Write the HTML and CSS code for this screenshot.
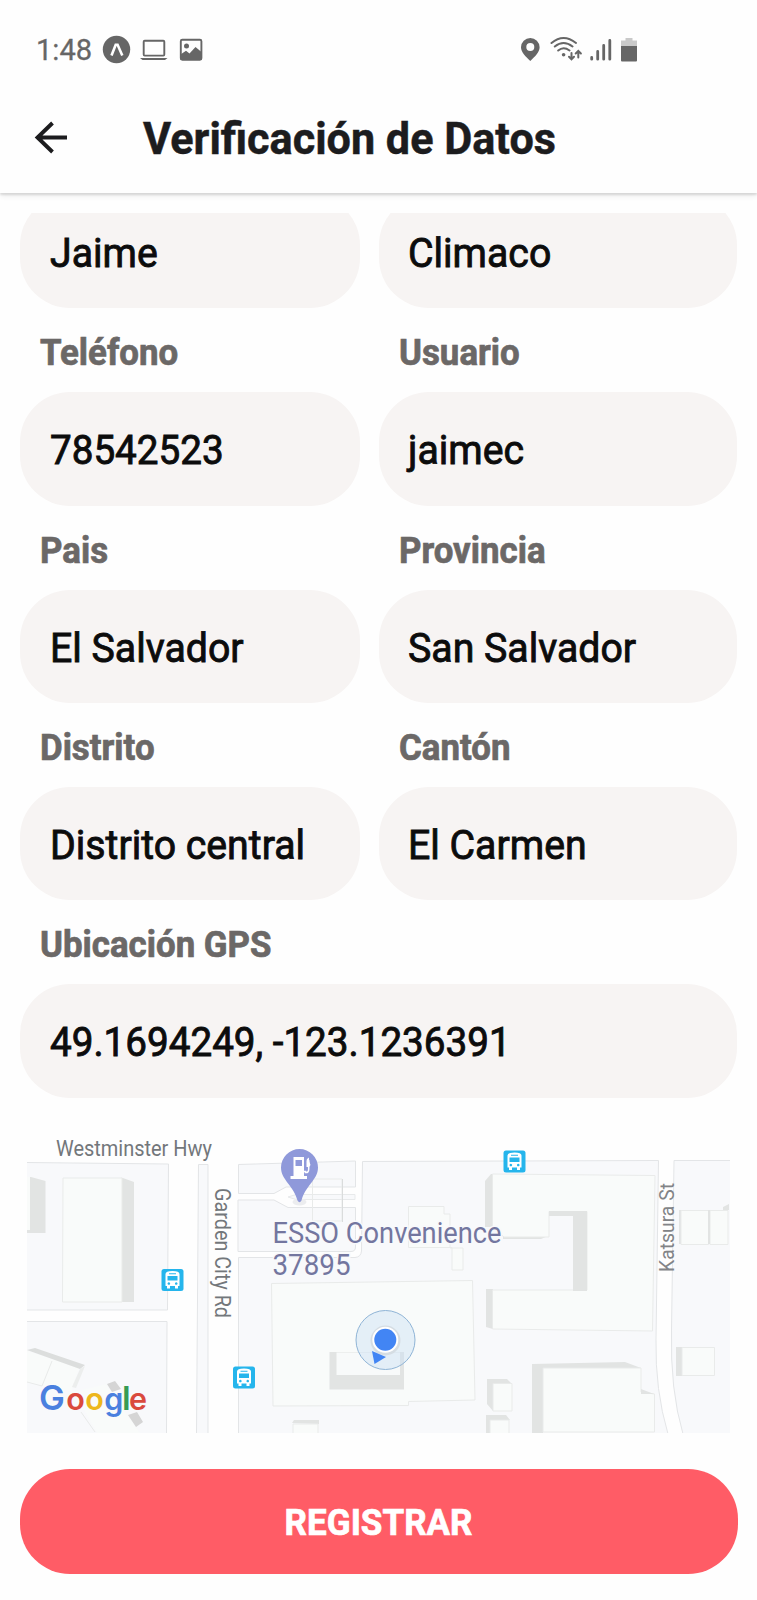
FILE: index.html
```html
<!DOCTYPE html>
<html lang="es">
<head>
<meta charset="utf-8">
<title>Verificación de Datos</title>
<link rel="stylesheet" href="styles.css">
</head>
<body>
<div class="statusbar">
  <span class="clock">1:48</span>
  <svg class="icons-left" width="102" height="30" viewBox="102 34 102 30">
    <circle cx="116.500" cy="48.500" r="13.700" fill="#666"/>
    <path d="M111.500 54.500L115.700 43.800H117.600L122.300 54.500" fill="none" stroke="#fff" stroke-width="2.600"/>
    <rect x="143.700" y="39.800" width="20.600" height="14.800" rx="1" fill="none" stroke="#666" stroke-width="1.900"/>
    <path d="M140 57H167.500L165 59H142.500Z" fill="#666"/>
    <rect x="180.800" y="38.800" width="20.600" height="20" rx="1.500" fill="none" stroke="#666" stroke-width="1.900"/>
    <circle cx="186.500" cy="45" r="2.500" fill="#666"/>
    <path d="M180.500 53.500L186 49.700L189.500 52.500L195.500 46L201.500 51V59H180.500Z" fill="#666"/>
  </svg>
  <svg class="icons-right" width="120" height="30" viewBox="519 34 120 30">
    <path fill-rule="evenodd" d="M530.300 37a9.300 9.300 0 0 1 9.300 9.300c0 5-4.500 9-9.300 13.800c-4.800-4.800-9.300-8.800-9.300-13.800a9.300 9.300 0 0 1 9.300-9.300ZM530.300 42a4 4 0 1 0 0 8a4 4 0 0 0 0-8Z" fill="#666"/>
    <g fill="none" stroke="#666" stroke-width="2" stroke-linecap="round">
      <path d="M551.500 42Q563.500 32 576 42M554.800 45.500Q563.500 38.500 572.500 45.500M558.200 49.500Q563.500 45 569.500 49.500"/>
      <path d="M571.500 52V58M569 55.800L571.500 58.300L574 55.800M578.300 56.500V50.500M575.700 52.500L578.300 50L580.900 52.500"/>
      <path stroke-width="2.800" d="M591.700 56.500V58.200M597.700 50.500V58.200M603.700 44.500V58.200M609.800 39.500V58.200"/>
    </g>
    <circle cx="563.600" cy="53.700" r="1.800" fill="#666"/>
    <path d="M625.500 37H632.500V39.500H637V45H621V39.500H625.500Z" fill="#c9c9c9"/>
    <path d="M621 45H637V59.500Q637 60.600 636 60.600H622Q621 60.600 621 59.500Z" fill="#666"/>
  </svg>
</div>
<header class="header">
  <svg class="back" width="34" height="34" viewBox="0 0 34 34"><path d="M33 17.500H3M18.500 3L3.500 17.500L18.500 32" fill="none" stroke="#1c1c1e" stroke-width="3.900"/></svg>
  <h1 class="title"><span>Verificación de Datos</span></h1>
</header>
<main class="content">
  <div class="form">
    <div class="field"><div class="value"><span>Jaime</span></div></div>
    <div class="field"><div class="value"><span>Climaco</span></div></div>
    <div class="field"><div class="label"><span>Teléfono</span></div><div class="value numeric"><span>78542523</span></div></div>
    <div class="field"><div class="label"><span>Usuario</span></div><div class="value"><span>jaimec</span></div></div>
    <div class="field"><div class="label"><span>Pais</span></div><div class="value"><span>El Salvador</span></div></div>
    <div class="field"><div class="label"><span>Provincia</span></div><div class="value"><span>San Salvador</span></div></div>
    <div class="field"><div class="label"><span>Distrito</span></div><div class="value"><span>Distrito central</span></div></div>
    <div class="field"><div class="label"><span>Cantón</span></div><div class="value"><span>El Carmen</span></div></div>
    <div class="field wide"><div class="label"><span>Ubicación GPS</span></div><div class="value numeric"><span>49.1694249, -123.1236391</span></div></div>
  </div>
  <svg class="map" width="703" height="311" viewBox="27 1122 703 311">
    <defs>
      <g id="bus">
        <rect width="22" height="22" rx="2.500" fill="#25b5ec"/>
        <path fill="#fff" fill-rule="evenodd" d="M4 5Q4 2 11 2T18 5V17H16.500V19.500H13.500V17H8.500V19.500H5.500V17H4ZM6 7V11.500H16V7ZM7.500 4.300V5.200H14.500V4.300ZM7.300 13.200a1.300 1.300 0 1 0 .1 0ZM14.700 13.200a1.300 1.300 0 1 0 .1 0Z"/>
      </g>
    </defs>
    <rect x="27" y="1122" width="703" height="311" fill="#fefefe"/>
    <!-- city blocks -->
    <g fill="#f8f9fb" stroke="#e3e5e7" stroke-width="1">
      <path d="M26 1162.500L168.500 1164L167.500 1310H26Z"/>
      <path d="M26 1321.500H167L166.500 1434H26Z"/>
      <path d="M198.500 1164.500H208V1434H196.500Z"/>
      <path d="M238.500 1164.500L355.500 1161V1187H286L274 1193.500H238.500Z"/>
      <path d="M238 1200H274L288 1207.500H355.500V1247Q355.500 1251.500 351 1251.500H238Z"/>
      <path d="M238.500 1257.500H355Q361 1257 361.500 1251L362.500 1161.500L658.500 1160.500L656 1340Q655 1390 668 1434H238.500Z"/>
      <path d="M674 1160.500H731V1434H683Q670 1390 671.500 1330Z"/>
    </g>
    <!-- filling station lanes and canopy -->
    <path d="M288 1197L296 1194.500H355V1199.500H296Z" fill="#f8f9fb" stroke="#e8eaeb"/>
    <path d="M312.500 1179H342V1221H312.500Z" fill="none" stroke="#e9ebea"/>
    <path d="M342.500 1179V1222" stroke="#dadcdc"/>
    <!-- buildings: shaded walls -->
    <g fill="#e2e4e3">
      <path d="M27 1177H31L45.500 1181V1233H27Z"/>
      <path d="M121.500 1177.500L134 1182V1302H121.500Z"/>
      <path d="M485 1181L491 1174H493V1227H485Z"/>
      <path d="M503 1236H548L541 1239H503Z"/>
      <path d="M486 1289H493V1329L486 1327Z"/>
      <path d="M532 1364L625 1362L641 1368H543V1433H532Z"/>
      <path d="M487 1379H507L512 1384H493V1411L487 1404ZM486 1415H506L510 1420H491V1433H486Z"/>
      <path d="M676 1347H682V1376H676ZM679 1210H681V1244H679ZM723 1207L729 1204V1210H723Z"/>
      <path d="M292 1423L294 1420H319V1424Z"/>
    </g>
    <!-- buildings: roofs -->
    <g fill="#f9fbfa" stroke="#e9ebea" stroke-width="1">
      <path d="M27 1177H30V1230H27Z" stroke="none"/>
      <path d="M63 1178H122V1302H62.500Z"/>
      <path d="M27 1351L79 1368L72 1389L97 1433H140L106 1384L74 1392L27 1382Z" stroke="none"/>
      <path d="M27 1382L42 1386L52 1361M81 1412L95 1432" fill="none"/>
      <path d="M408.500 1206.500H444V1214H450V1248H463V1270H452V1247.500H408.500Z"/>
      <path d="M271.500 1283.500L472.500 1280.500L475 1400L408.500 1401.500V1405.500L273 1406Z"/>
      <path d="M492.500 1174L655 1175.500L652.500 1331L492.500 1329V1290H573.500H587V1211.500H549V1237H504L492.500 1228Z"/>
      <path d="M543 1368H641V1392L654.500 1394V1432H543Z"/>
      <path d="M493 1383.500H512V1411H493ZM490 1420H509V1434H490Z"/>
      <path d="M682 1347.500H714.500V1375.500H682ZM681 1210.500H708.500V1244.500H681ZM710 1210.500H728V1244.500H710ZM293 1424H318V1434H293Z"/>
    </g>
    <path d="M549 1211H587V1291H573V1216H549ZM708 1210H710V1244H708ZM641 1389L654 1394H641Z" fill="#e2e4e3"/>
    <path d="M329.500 1352H404V1389.500H329.500Z" fill="#e2e4e3"/>
    <path d="M336.500 1352.500H400V1375H336.500Z" fill="#f8fafa"/>
    <path d="M27 1350L35 1348L85 1365L80 1369Z" fill="#dcdedd"/>
    <path d="M80 1369L85 1366L76 1388L72 1387Z" fill="#eceeed"/>
    <path d="M107 1384L115 1381L121 1389L112 1392ZM128 1415L137 1412L143 1422L136 1427Z" fill="#d5d5d5"/>
    <!-- accuracy ring and position -->
    <circle cx="385.500" cy="1340" r="29.500" fill="#c9e0f3" fill-opacity=".45" stroke="#8fb4d6" stroke-width="1"/>
    <circle cx="385.500" cy="1340.500" r="15" fill="#d5dde3"/>
    <circle cx="385.300" cy="1339.700" r="13" fill="#fff"/>
    <circle cx="385.300" cy="1339.700" r="11" fill="#4285f4"/>
    <path d="M372 1351L386 1357L374.500 1364Z" fill="#4285f4"/>
    <use href="#bus" x="161.500" y="1269"/>
    <use href="#bus" x="233" y="1366.500"/>
    <use href="#bus" x="503.500" y="1150.500"/>
    <!-- fuel station pin -->
    <ellipse cx="299.500" cy="1202" rx="7" ry="3.500" fill="#ecedef"/>
    <path d="M299.500 1149a18.500 18.500 0 0 1 18.500 18.500C318 1180 305 1186 301.500 1200.500Q299.500 1204 297.500 1200.500C294 1186 281 1180 281 1167.500a18.500 18.500 0 0 1 18.500-18.500Z" fill="#8f99da"/>
    <path fill="#fff" fill-rule="evenodd" d="M293.500 1157H304V1176H307V1179H290.500V1176H293.500ZM295.500 1160V1166H302V1160Z"/>
    <path d="M304 1171.500H305.500V1172.500Q308.700 1173 308.700 1169V1160" fill="none" stroke="#fff" stroke-width="1.500"/>
    <path d="M307 1159L309 1157.500V1161L310.500 1165L309 1167H306.500V1161Z" fill="#fff"/>
    <!-- labels -->
    <g class="map-text">
      <text x="56" y="1156" font-size="21.500" textLength="156" lengthAdjust="spacingAndGlyphs" fill="#73777b">Westminster Hwy</text>
      <text transform="translate(214.500 1188) rotate(90)" font-size="21.500" textLength="130" lengthAdjust="spacingAndGlyphs" fill="#73777b">Garden City Rd</text>
      <text transform="translate(674 1272) rotate(-90)" font-size="20.500" textLength="89" lengthAdjust="spacingAndGlyphs" fill="#828487">Katsura St</text>
      <g fill="#73769f" stroke="#f8f9fb" stroke-width="3" paint-order="stroke">
        <text x="272.500" y="1242.500" font-size="29.500" textLength="229" lengthAdjust="spacingAndGlyphs">ESSO Convenience</text>
        <text x="272.500" y="1274.500" font-size="29.500" textLength="78" lengthAdjust="spacingAndGlyphs">37895</text>
      </g>
    </g>
    <text class="brand" y="1409.500" font-size="30.500"><tspan x="39" font-size="34.500" fill="#4a80df">G</tspan><tspan x="66.300" fill="#da4a3d">o</tspan><tspan x="85.300" fill="#edb71c">o</tspan><tspan x="104.300" fill="#4a80df">g</tspan><tspan x="122" font-size="33" fill="#369b53">l</tspan><tspan x="129" fill="#da4a3d">e</tspan></text>
  </svg>
  <button class="submit"><span>REGISTRAR</span></button>
</main>
</body>
</html>
```

FILE: styles.css
```css
* { box-sizing: border-box; }

body {
  margin: 0;
  width: 757px;
  height: 1600px;
  overflow: hidden;
  background: #fefefe;
  font-family: Roboto, "Noto Sans", sans-serif;
  display: flex;
  flex-direction: column;
}

.statusbar {
  height: 90px;
  padding: 9px 118px 0 36px;
  display: flex;
  align-items: center;
  flex: none;
}

.clock {
  width: 66px;
  padding-top: 1px;
  font-size: 30px;
  line-height: 34px;
  color: #666;
  white-space: nowrap;
  transform: scaleX(0.97);
  transform-origin: left;
  -webkit-text-stroke: 0.300px #666;
}

.icons-right { margin-left: auto; }

.header {
  flex: none;
  height: 103px;
  padding: 0 0 6px 34px;
  display: flex;
  align-items: center;
  background: #fefefe;
  box-shadow: 0 2px 2px rgba(0, 0, 0, 0.12), 0 5px 5px -1px rgba(0, 0, 0, 0.05);
}

.back { margin-bottom: 4px; }

.title {
  margin: 0 0 0 75px;
  font-size: 45px;
  line-height: 54px;
  font-weight: 700;
  color: #1c1c1e;
}

.title span,
.label span,
.value span,
.submit span {
  display: inline-block;
  white-space: nowrap;
  transform-origin: left;
}

.title span {
  transform: scaleX(0.959);
  -webkit-text-stroke: 0.500px #1c1c1e;
}

.content {
  flex: none;
  margin-top: 20px;
  height: 1387px;
  overflow: hidden;
  padding: 0 19px 0 20px;
}

.form {
  margin-top: -18px;
  display: grid;
  grid-template-columns: 340px 358.500px;
  column-gap: 18.700px;
}

.field.wide { grid-column: 1 / -1; }

.label {
  height: 84px;
  padding: 3px 0 0 20px;
  font-size: 36px;
  line-height: 84px;
  font-weight: 700;
  color: #6b6867;
}

.label span {
  transform: scaleX(0.968);
  -webkit-text-stroke: 0.700px #6b6867;
}

.value {
  height: 113.350px;
  padding: 2px 0 0 29.700px;
  border-radius: 50px;
  background: #f7f4f3;
  font-size: 41px;
  line-height: 112px;
  color: #0c0c0c;
}

.value span {
  transform: scaleX(0.957);
  -webkit-text-stroke: 0.900px #0c0c0c;
}

.value.numeric span { transform: scaleX(0.942); }

.map {
  display: block;
  margin: 24px 0 0 7px;
}

.map-text { font-family: Roboto, sans-serif; }
.brand { font-family: Inter, "Open Sans", sans-serif; font-weight: 600; }

.submit {
  display: block;
  width: 717.500px;
  height: 105px;
  margin-top: 36px;
  padding: 4px 0 0;
  border: 0;
  border-radius: 50px;
  background: #ff5c66;
  color: #fff;
  font: 700 36px/1 Roboto, sans-serif;
}

.submit span {
  transform: scaleX(0.973);
  transform-origin: center;
  -webkit-text-stroke: 0.700px #fff;
}
```
